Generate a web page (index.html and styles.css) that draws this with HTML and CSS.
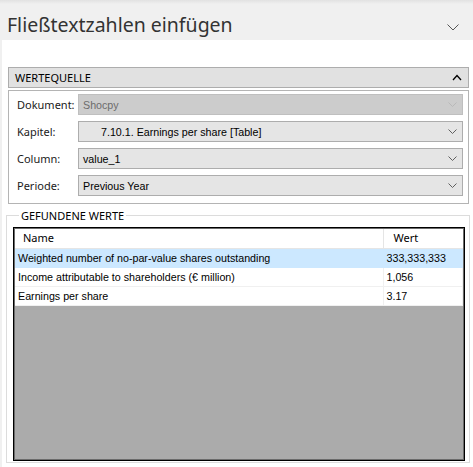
FILE: index.html
```html
<!DOCTYPE html>
<html lang="de">
<head>
<meta charset="UTF-8">
<title>Fließtextzahlen einfügen</title>
<link rel="stylesheet" href="styles.css">
</head>
<body>
  <header class="title-bar">
    <h1>Fließtextzahlen einfügen</h1>
    <svg class="title-chevron" width="12" height="7" viewBox="0 0 12 7"><path d="M0.5 0.5 L6 6 L11.5 0.5" fill="none" stroke="#555" stroke-width="1"/></svg>
  </header>

  <main class="pane">
    <section class="source">
      <div class="source-head">
        <span>WERTEQUELLE</span>
        <svg width="10" height="7" viewBox="0 0 10 7"><path d="M1 6 L5 1.5 L9 6" fill="none" stroke="#000" stroke-width="1.3"/></svg>
      </div>
      <div class="source-body">
        <div class="field">
          <label>Dokument:</label>
          <div class="combo disabled"><span>Shocpy</span><svg width="9" height="5" viewBox="0 0 9 5"><path d="M0.5 0.5 L4.5 4.5 L8.5 0.5" fill="none" stroke="#b9b9b9"/></svg></div>
        </div>
        <div class="field">
          <label>Kapitel:</label>
          <div class="combo indent"><span>7.10.1. Earnings per share [Table]</span><svg width="9" height="5" viewBox="0 0 9 5"><path d="M0.5 0.5 L4.5 4.5 L8.5 0.5" fill="none" stroke="#606060"/></svg></div>
        </div>
        <div class="field">
          <label>Column:</label>
          <div class="combo"><span>value_1</span><svg width="9" height="5" viewBox="0 0 9 5"><path d="M0.5 0.5 L4.5 4.5 L8.5 0.5" fill="none" stroke="#606060"/></svg></div>
        </div>
        <div class="field">
          <label>Periode:</label>
          <div class="combo"><span>Previous Year</span><svg width="9" height="5" viewBox="0 0 9 5"><path d="M0.5 0.5 L4.5 4.5 L8.5 0.5" fill="none" stroke="#606060"/></svg></div>
        </div>
      </div>
    </section>

    <fieldset class="found">
      <legend>GEFUNDENE WERTE</legend>
      <div class="list">
        <table>
          <thead>
            <tr><th class="col-name">Name</th><th class="col-value">Wert</th></tr>
          </thead>
          <tbody>
            <tr class="selected"><td>Weighted number of no-par-value shares outstanding</td><td>333,333,333</td></tr>
            <tr><td>Income attributable to shareholders (€ million)</td><td>1,056</td></tr>
            <tr><td>Earnings per share</td><td>3.17</td></tr>
          </tbody>
        </table>
      </div>
    </fieldset>
  </main>
</body>
</html>
```

FILE: styles.css
```css
* {
  margin: 0;
  padding: 0;
  box-sizing: border-box;
}

body {
  width: 473px;
  height: 467px;
  overflow: hidden;
  background: #f0f0f0;
  font-family: "Noto Sans", sans-serif;
  color: #1a1a1a;
  display: flex;
  flex-direction: column;
}

.title-bar {
  flex-shrink: 0;
  height: 40px;
  display: flex;
  align-items: center;
  justify-content: space-between;
  padding: 0 14px 0 7px;
  background: linear-gradient(#e2e2e2, #f0f0f0 4px);
}

.title-bar h1 {
  font-size: 19.5px;
  font-weight: 400;
  color: #333;
  margin-top: 9px;
}

.title-chevron {
  margin-top: 14px;
}

.pane {
  flex: 1;
  min-height: 0;
  margin-left: 2px;
  background: #fff;
  padding: 27px 3px 0 4px;
}

/* Werte-Quelle */
.source {
  margin: 0 1px 0 2px;
}

.source-head {
  height: 21px;
  display: flex;
  align-items: center;
  justify-content: space-between;
  padding: 0 6px 0 6px;
  background: #e1e1e1;
  border: 1px solid #adadad;
  font-size: 11px;
  color: #000;
}

.source-body {
  margin-top: 2px;
  border: 1px solid #b4b4b4;
  padding: 3px 5px 7px 8px;
  display: flex;
  flex-direction: column;
  gap: 6px;
}

.field {
  display: flex;
  align-items: center;
}

.field label {
  width: 61px;
  font-size: 11px;
  color: #1a1a1a;
}

.combo {
  flex: 1;
  height: 21px;
  display: flex;
  align-items: center;
  justify-content: space-between;
  padding: 0 5px 0 4px;
  background: #e5e5e5;
  border: 1px solid #adadad;
  font-family: "Liberation Sans", Arial, sans-serif;
  font-size: 10.7px;
  color: #000;
}

.combo.indent {
  padding-left: 22px;
}

.combo.disabled {
  background: #cccccc;
  border-color: #bfbfbf;
  color: #6d6d6d;
}

/* Gefundene Werte */
.found {
  margin-top: 4px;
  border: 1px solid #dcdcdc;
  padding: 4px 4px 2px 6px;
  height: 255px;
}

.found legend {
  margin-left: 6px;
  padding: 0 2px;
  font-size: 11px;
  color: #000;
}

.list {
  height: 234px;
  background: #ababab;
  border: 1px solid #000;
  box-shadow: inset 0 0 0 1px #6b6b6b;
  padding: 1px;
}

.list table {
  width: 448px;
  border-collapse: collapse;
  font-family: "Liberation Sans", Arial, sans-serif;
  font-size: 10.7px;
  color: #000;
}

.list th {
  height: 19px;
  background: #fff;
  font-family: "Noto Sans", sans-serif;
  font-weight: 400;
  font-size: 11px;
  text-align: left;
  padding: 0 0 1px 8px;
  border-bottom: 1px solid #e5e5e5;
}

.list th.col-name {
  width: 368px;
  border-right: 1px solid #e5e5e5;
}

.list th.col-value {
  padding-left: 10px;
}

.list td {
  height: 19px;
  padding: 0 0 0 3px;
  background: #fff;
  border-bottom: 1px solid #f0f0f0;
  border-right: 1px solid #f0f0f0;
}

.list tr.selected td {
  background: #cce8ff;
  border-color: #cce8ff;
}
```
